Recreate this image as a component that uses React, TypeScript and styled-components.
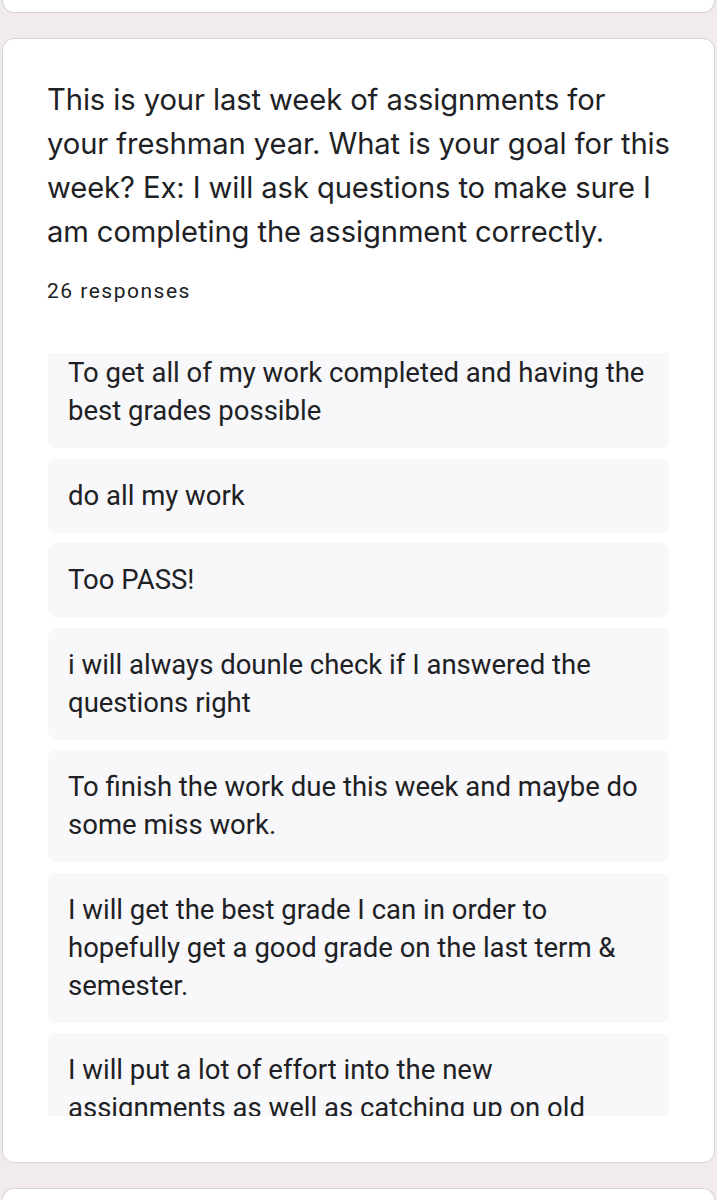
import React from "react";
import styled, { createGlobalStyle } from "styled-components";

const Global = createGlobalStyle`
  html, body {
    margin: 0;
    padding: 0;
    background: #f2ebee;
  }
  body {
    font-family: Roboto, "Liberation Sans", sans-serif;
    color: #202124;
  }
`;

const Page = styled.div`
  display: flex;
  flex-direction: column;
  gap: 25px;
  padding: 0 2px;
  min-height: 1200px;
`;

const Card = styled.section<{ $cut?: "top" | "bottom" }>`
  background: #ffffff;
  border: 1px solid #d6d3d5;
  border-radius: ${(p) =>
    p.$cut === "top" ? "0 0 12px 12px" : p.$cut === "bottom" ? "12px 12px 0 0" : "12px"};
  ${(p) => (p.$cut === "top" ? "border-top: none; height: 12px;" : "")}
  ${(p) => (p.$cut === "bottom" ? "border-bottom: none; height: 40px;" : "")}
`;

const QuestionCard = styled(Card)`
  padding: 39px 45px 46px 44px;
  display: flex;
  flex-direction: column;
`;

const Title = styled.h2`
  margin: 0 -18px 0 0;
  font-family: Inter, "Open Sans", sans-serif;
  font-weight: 400;
  font-size: 29.2px;
  line-height: 44px;
  letter-spacing: -0.1px;
  color: #202124;
`;

const Count = styled.div`
  margin-top: 25px;
  font-family: Roboto, sans-serif;
  font-size: 21px;
  line-height: 24px;
  letter-spacing: 1.5px;
  color: #202124;
`;

const Viewport = styled.div`
  margin-top: 50px;
  height: 763px;
  overflow: hidden;
  margin-left: 1px;
`;

const List = styled.div`
  display: flex;
  flex-direction: column;
  gap: 10.5px;
  margin-top: -17px;
`;

const Response = styled.div`
  background: #f8f8fa;
  border-radius: 8px;
  padding: 18px 20px;
  font-family: Roboto, sans-serif;
  font-size: 27.5px;
  line-height: 38px;
  color: #202124;
`;

const responses = [
  "To get all of my work completed and having the best grades possible",
  "do all my work",
  "Too PASS!",
  "i will always dounle check if I answered the questions right",
  "To finish the work due this week and maybe do some miss work.",
  "I will get the best grade I can in order to hopefully get a good grade on the last term & semester.",
  "I will put a lot of effort into the new assignments as well as catching up on old work.",
];

export default function App() {
  return (
    <>
      <Global />
      <Page>
        <Card $cut="top" />
        <QuestionCard>
          <Title>
            This is your last week of assignments for
            <br />
            your freshman year. What is your goal for this week? Ex: I will ask questions to make
            sure I am completing the assignment correctly.
          </Title>
          <Count>26 responses</Count>
          <Viewport>
            <List>
              {responses.map((r) => (
                <Response key={r}>{r}</Response>
              ))}
            </List>
          </Viewport>
        </QuestionCard>
        <Card $cut="bottom" />
      </Page>
    </>
  );
}
